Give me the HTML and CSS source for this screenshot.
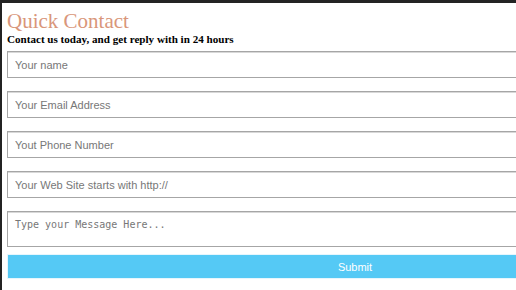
FILE: index.html
```html
<!DOCTYPE HTML><html>
<head>
	<meta name="viewport" charset="UTF-8" content="width=device-width, initial-scale=1">
	<title>Quick Contact</title>
	<link rel="stylesheet" href="styles.css">
</head>
<body>
	<div class="frame">
		<div class="contact">
			<h2 class="title">Quick Contact</h2>
			<p class="lead">Contact us today, and get reply with in 24 hours</p>
			<form class="form">
				<input type="text" class="field" placeholder="Your name">
				<input type="text" class="field" placeholder="Your Email Address">
				<input type="text" class="field" placeholder="Yout Phone Number">
				<input type="text" class="field" placeholder="Your Web Site starts with http://">
				<textarea class="field message" placeholder="Type your Message Here..."></textarea>
				<button type="button" class="submit">Submit</button>
			</form>
		</div>
	</div>
</body>
</html>
```

FILE: styles.css
```css
html {
	font-family: "Liberation Serif", serif;}
body {
	background-color: #232323;
	margin: 0;
	overflow: hidden;
	height: 290px;}
.frame {
	margin: 3px 0 0 2px;
	background-color: #fff;
	height: 287px;
	overflow: hidden;
}
.contact {
	padding: 7px 0 0 5px;
	width: 700px;
}
.title {
	margin: 0;
	font-weight: normal;
	font-size: 21px;
	line-height: 22px;
	color: #d9967a;
}
.lead {
	margin: 0;
	font-weight: bold;
	font-size: 11.1px;
	line-height: 14px;
	color: #000;
}
.form {
	display: flex;
	flex-direction: column;
	gap: 13px;
	margin-top: 5px;
}
.field {
	box-sizing: border-box;
	width: 696px;
	height: 27px;
	margin: 0;
	padding: 0 7px;
	border: 1px solid #a6a6a6;
	box-shadow: inset 0 1px 0 #d8d8d8;
	font-family: "Liberation Sans", Arial, sans-serif;
	font-size: 11px;
}
.field::placeholder {color: #777;}
.message {
	height: 36px;
	padding-top: 7px;
	resize: none;
	font-family: "DejaVu Sans Mono", monospace;
	font-size: 10px;
}
.submit {
	width: 696px;
	height: 25px;
	margin-top: -6px;
	border: 1px solid #e6f6fd;
	background-color: #55c9f5;
	color: #fff;
	font-family: "Liberation Sans", Arial, sans-serif;
	font-size: 11px;
}
```
